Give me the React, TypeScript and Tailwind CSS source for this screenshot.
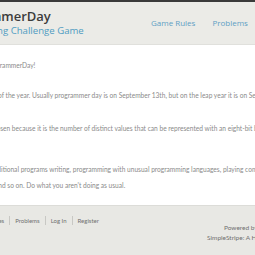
import React from "react";

export default function App() {
  const font = { fontFamily: '"Open Sans", "Liberation Sans", sans-serif' };
  const lato = { fontFamily: 'Lato, "Open Sans", sans-serif' };
  return (
    <div className="w-[255px] h-[255px] overflow-hidden bg-white flex flex-col" style={font}>
      <div className="h-[2px] bg-[#3a3a3a] shrink-0" />
      <header className="h-[43px] shrink-0 bg-[#ebebe7] border-b border-[#e0e0dc] flex items-start overflow-hidden">
        <div className="mt-[7px] flex flex-col w-[151px] shrink-0">
          <div className="ml-[-53px] text-[13px] leading-[15px] font-semibold text-[#3c3c3c] whitespace-nowrap">ProgrammerDay</div>
          <div className="ml-[-53px] text-[9.6px] leading-[13px] text-[#4f9cc2] whitespace-nowrap">Programming Challenge Game</div>
        </div>
        <nav className="mt-[15px] flex gap-[17px] text-[8px] text-[#5f9fc4] whitespace-nowrap">
          <span>Game Rules</span>
          <span>Problems</span>
          <span>Log In</span>
        </nav>
      </header>
      <main className="flex-1 overflow-hidden text-[6.6px] leading-[16px] text-[#8a8a8a] pt-[12px]" style={lato}>
        <p className="ml-[-34px] whitespace-nowrap">Happy ProgrammerDay!</p>
        <p className="ml-[-99px] mt-[14px] whitespace-nowrap">ProgrammerDay is the 256th day of the year. Usually programmer day is on September 13th, but on the leap year it is on September 12th.</p>
        <p className="ml-[-73px] mt-[17px] whitespace-nowrap">The number 256 was chosen because it is the number of distinct values that can be represented with an eight-bit byte.</p>
        <p className="ml-[-65px] mt-[25px] whitespace-nowrap">We celebrate with traditional programs writing, programming with unusual programming languages, playing computer games</p>
        <p className="ml-[-5px] whitespace-nowrap">and so on. Do what you aren't doing as usual.</p>
      </main>
      <footer className="h-[50px] shrink-0 bg-[#e8e8e4] border-t border-[#dcdcd8] flex overflow-hidden text-[6px] text-[#707070]" style={lato}>
        <div className="ml-[-27px] mt-[9px] flex items-center h-[10px] whitespace-nowrap shrink-0">
          <span className="pr-[5px] border-r border-[#c8c8c4]">Game Rules</span>
          <span className="px-[5px] border-r border-[#c8c8c4]">Problems</span>
          <span className="px-[5px] border-r border-[#c8c8c4]">Log In</span>
          <span className="px-[5px]">Register</span>
        </div>
        <div className="ml-auto w-[48px] shrink-0 mt-[17px] flex flex-col leading-[10px] whitespace-nowrap text-[6.5px]">
          <span className="pl-[17px]">Powered by WordPress</span>
          <span>SimpleStripe: A Handcrafted theme</span>
        </div>
      </footer>
    </div>
  );
}
